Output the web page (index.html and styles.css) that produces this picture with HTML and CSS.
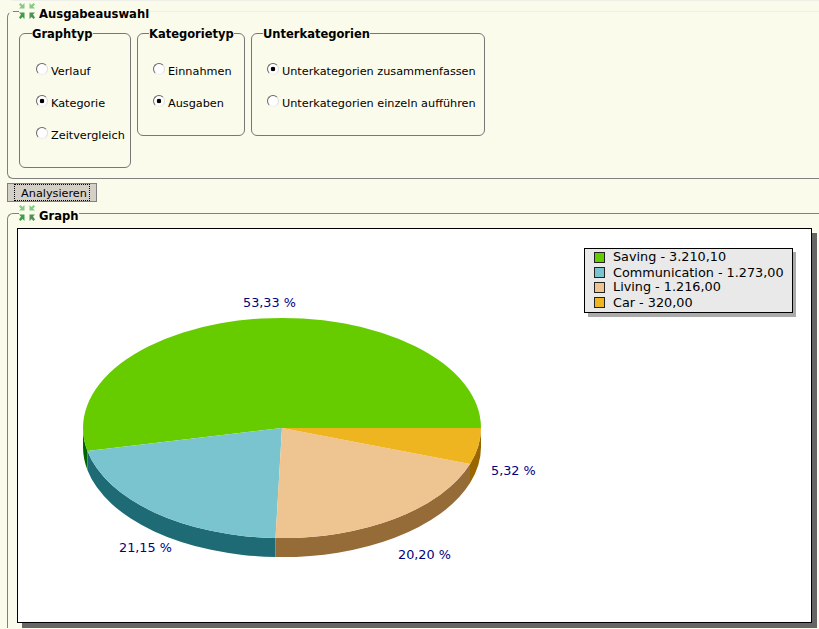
FILE: index.html
```html
<!DOCTYPE html>
<html lang="de">
<head>
    <meta charset="UTF-8">
    <meta name="viewport" content="width=device-width, initial-scale=1.0">
    <title>Ausgabeauswahl</title>
    <link rel="stylesheet" href="styles.css">
</head>
<body>
    <svg class="defs" width="0" height="0">
        <symbol id="collapse" viewBox="0 0 16 16">
            <path fill="#86c986" d="M0 1.5 1.5 0 3.5 2 5.5 0V5.5H0L2 3.5Z"/>
            <path fill="#86c986" d="M16 1.5 14.500 0 12.500 2 10.500 0V5.500H16L14 3.500Z"/>
            <path fill="#3f9d4a" d="M0 14.500 1.500 16 3.500 14 5.500 16V9.500H0L2 11.500Z"/>
            <path fill="#4f8f5a" d="M16 14.500 14.500 16 12.500 14 10.500 16V9.500H16L14 11.500Z"/>
        </symbol>
    </svg>

    <div class="top-edge"></div>

    <form id="analyseForm">
        <fieldset class="panel">
            <legend class="panel-title"><svg class="icon"><use href="#collapse"/></svg><span>Ausgabeauswahl</span></legend>
            <div class="groups">
                <fieldset class="group group-graph">
                    <legend>Graphtyp</legend>
                    <div class="options">
                        <label class="option"><input type="radio" name="graph"><span>Verlauf</span></label>
                        <label class="option"><input type="radio" name="graph" checked><span>Kategorie</span></label>
                        <label class="option"><input type="radio" name="graph"><span>Zeitvergleich</span></label>
                    </div>
                </fieldset>
                <fieldset class="group group-type">
                    <legend>Kategorietyp</legend>
                    <div class="options">
                        <label class="option"><input type="radio" name="type"><span>Einnahmen</span></label>
                        <label class="option"><input type="radio" name="type" checked><span>Ausgaben</span></label>
                    </div>
                </fieldset>
                <fieldset class="group group-sub">
                    <legend>Unterkategorien</legend>
                    <div class="options">
                        <label class="option"><input type="radio" name="sub" checked><span>Unterkategorien zusammenfassen</span></label>
                        <label class="option"><input type="radio" name="sub"><span>Unterkategorien einzeln aufführen</span></label>
                    </div>
                </fieldset>
            </div>
        </fieldset>

        <button type="button" class="analyse"><span>Analysieren</span></button>

        <fieldset class="panel panel-graph">
            <legend class="panel-title"><svg class="icon"><use href="#collapse"/></svg><span>Graph</span></legend>
            <div class="chart">
                <svg class="pie" viewBox="18 229 793 393" width="793" height="393">
                    <!-- sides -->
                    <path fill="#006600" d="M83 428A199 110 0 0 0 87.400 450.900V469.900A199 110 0 0 1 83 447Z"/>
                    <path fill="#1f6b75" d="M87.400 450.900A199 110 0 0 0 275.500 538V557A199 110 0 0 1 87.400 469.900Z"/>
                    <path fill="#956b38" d="M275.500 538A199 110 0 0 0 470 464.100V483.100A199 110 0 0 1 275.500 557Z"/>
                    <path fill="#996600" d="M470 464.100A199 110 0 0 0 481 428V447A199 110 0 0 1 470 483.100Z"/>
                    <!-- top -->
                    <path fill="#66cc00" d="M282 428H481A199 110 0 1 0 87.400 450.900Z"/>
                    <path fill="#7ac4cf" d="M282 428 87.400 450.900A199 110 0 0 0 275.500 538Z"/>
                    <path fill="#eec591" d="M282 428 275.500 538A199 110 0 0 0 470 464.100Z"/>
                    <path fill="#efb521" d="M282 428 470 464.100A199 110 0 0 0 481 428Z"/>

                    <g class="pct">
                        <text x="243" y="307">53,33 %</text>
                        <text x="491" y="475">5,32 %</text>
                        <text x="398" y="559">20,20 %</text>
                        <text x="119" y="552">21,15 %</text>
                    </g>

                    <rect x="588" y="252" width="208" height="65" fill="#aaaaaa"/>
                    <rect x="584.500" y="248.500" width="208" height="64" fill="#e9e9e9" stroke="#000"/>
                    <g class="swatches" stroke="#222">
                        <rect x="594.500" y="252.500" width="10" height="10" fill="#66cc00"/>
                        <rect x="594.500" y="267.500" width="10" height="10" fill="#7ac4cf"/>
                        <rect x="594.500" y="282.500" width="10" height="10" fill="#eec591"/>
                        <rect x="594.500" y="297.500" width="10" height="10" fill="#efb521"/>
                    </g>
                    <g class="keys">
                        <text x="613" y="261">Saving - 3.210,10</text>
                        <text x="613" y="277">Communication - 1.273,00</text>
                        <text x="613" y="291">Living - 1.216,00</text>
                        <text x="613" y="307">Car - 320,00</text>
                    </g>
                </svg>
            </div>
        </fieldset>
    </form>
</body>
</html>
```

FILE: styles.css
```css
html, body {
    height: 100%;
    overflow: hidden;
}
body {
    margin: 0;
    padding-left: 7px;
    box-sizing: border-box;
    background-color: #fafbeb;
    font-family: "DejaVu Sans", sans-serif;
    font-size: 11.25px;
    color: #000;
}
.defs {
    position: absolute;
}
.top-edge {
    height: 1px;
    margin: 0 0 2px 5px;
    background-color: #efefe9;
}
fieldset {
    margin: 0;
    padding: 0;
    min-width: 0;
}
.panel {
    box-sizing: border-box;
    border: 1px solid #808080;
    border-top-color: #eeeeea;
    border-right: 0;
    border-radius: 6px 0 0 6px;
    padding: 0 0 10px;
}
.panel-graph {
    border-top-color: #808080;
    border-bottom: 0;
    border-radius: 6px 0 0 0;
    margin-top: 3px;
    padding-bottom: 5px;
}
.panel-title {
    position: relative;
    display: flex;
    align-items: flex-start;
    margin-left: 11px;
    padding: 0;
    height: 16px;
    font-weight: bold;
    font-size: 11.6px;
}
.panel-title::before {
    content: "";
    position: absolute;
    right: 100%;
    top: 7.500px;
    width: 6px;
    height: 1px;
    background-color: #808080;
}
.panel-title span {
    margin-top: 4px;
    line-height: 14px;
}
.icon {
    width: 16px;
    height: 16px;
    margin-right: 4px;
}
.groups {
    display: flex;
    align-items: flex-start;
    gap: 6px;
    margin: 6px 0 0 11px;
}
.group {
    border: 1px solid #777;
    border-radius: 6px;
    box-sizing: border-box;
}
.group legend {
    font-weight: bold;
    padding: 2px 0 0;
    margin-left: 11px;
    font-size: 11.5px;
    line-height: 14px;
}
.group-graph { width: 112px; }
.group-graph legend { margin-left: 12px; }
.group-type { width: 108px; }
.group-sub { width: 234px; }
.options {
    display: flex;
    flex-direction: column;
    gap: 16px;
    padding: 22px 0 24px 15px;
}
.group-graph .options { padding-left: 16px; }
.option {
    display: flex;
    gap: 3px;
    height: 16px;
    line-height: 18px;
    white-space: nowrap;
}
.option input {
    appearance: none;
    width: 12px;
    height: 12px;
    margin: 0;
    border: 1px solid;
    border-color: #666 #ddd #eee #666;
    border-radius: 50%;
    background: #fff;
    flex: none;
}
.option input:checked {
    background: radial-gradient(circle, #000 0, #000 2px, #fff 2.600px);
}
.analyse {
    display: block;
    margin: 4px 0 0;
    padding: 0 6px;
    width: 90px;
    height: 19px;
    box-sizing: border-box;
    background-color: #d4d0c8;
    border: 1px solid #808080;
    font: inherit;
    color: #000;
}
.analyse span {
    display: block;
    height: 17px;
    box-sizing: border-box;
    padding-left: 4px;
    line-height: 18px;
    border: 1px dotted #000;
}
.chart {
    width: 795px;
    height: 395px;
    margin: 7px 0 0 9px;
    box-sizing: border-box;
    background-color: #fff;
    border: 1px solid #000;
    box-shadow: 5px 5px 0 #666;
}
.pie {
    display: block;
}
.pct text {
    font-size: 12.8px;
    fill: #000080;
}
.keys text {
    font-size: 12.8px;
    fill: #000;
}
```
